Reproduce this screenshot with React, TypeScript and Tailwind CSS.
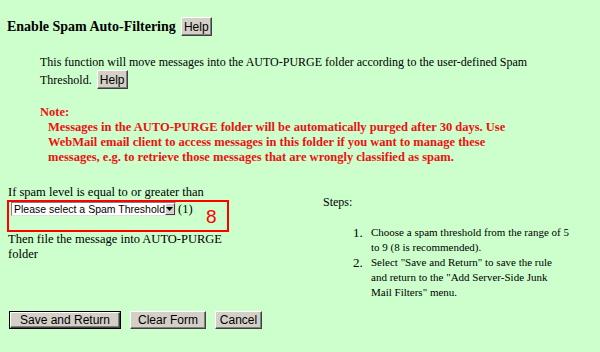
import React from "react";

const serif = { fontFamily: '"Liberation Serif", "Times New Roman", serif' };
const sans = { fontFamily: '"Liberation Sans", Arial, sans-serif' };

function WinButton({ children, className = "", isDefault = false }: { children: React.ReactNode; className?: string; isDefault?: boolean }) {
  return (
    <div className={`${isDefault ? "border border-black" : ""} inline-flex shrink-0`}>
      <div
        className={`bg-[#d4d0c8] border-t border-l border-t-white border-l-white border-b border-r border-b-[#404040] border-r-[#404040] shadow-[inset_-1px_-1px_0_#808080] flex items-center justify-center text-[12px] text-black leading-none ${className}`}
        style={sans}
      >
        {children}
      </div>
    </div>
  );
}

export default function App() {
  return (
    <div className="w-[600px] h-[352px] bg-[#ccffcc] text-black overflow-hidden relative" style={serif}>
      <div className="pt-[17px] pl-[7px] flex items-center gap-[5px] h-[36px]">
        <h1 className="text-[14px] font-bold leading-none">Enable Spam Auto-Filtering</h1>
        <WinButton className="w-[31px] h-[19px] text-[11.5px]">Help</WinButton>
      </div>

      <div className="pl-[40px] mt-[19px] text-[12px]">
        <div className="h-[15px] leading-[15px] whitespace-nowrap">
          This function will move messages into the AUTO-PURGE folder according to the user-defined Spam
        </div>
        <div className="flex items-center h-[19px] gap-[5px]">
          <span className="leading-[15px] pt-[1px]">Threshold.</span>
          <WinButton className="w-[31px] h-[19px] text-[11.5px]">Help</WinButton>
        </div>
      </div>

      <div className="pl-[40px] mt-[16px] text-[#ee1111] font-bold text-[12.5px] leading-[15px]">
        <div>Note:</div>
        <div className="pl-[8px] whitespace-nowrap">
          <div>Messages in the AUTO-PURGE folder will be automatically purged after 30 days. Use</div>
          <div>WebMail email client to access messages in this folder if you want to manage these</div>
          <div>messages, e.g. to retrieve those messages that are wrongly classified as spam.</div>
        </div>
      </div>

      <div className="flex mt-[20px]">
        <div className="w-[323px] pl-[8px] text-[12.5px] leading-[15px]">
          <div className="h-[15px] whitespace-nowrap">If spam level is equal to or greater than</div>
          <div className="relative w-[222px] h-[32px] ml-[-1px]">
            <div className="absolute inset-0 border-2 border-[#ff0000] pointer-events-none" />
            <div className="flex items-center pl-[4px] pt-[2px]">
              <div className="w-[165px] h-[14px] bg-white border-t border-l border-[#808080] border-b border-r border-b-[#e0e0e0] border-r-[#e0e0e0] flex items-center justify-between" style={sans}>
                <span className="text-[10.5px] leading-none pl-[2px] whitespace-nowrap">Please select a Spam Threshold</span>
                <span className="w-[12px] h-[12px] bg-[#d4d0c8] border-t border-l border-t-white border-l-white border-b border-r border-b-[#404040] border-r-[#404040] flex items-center justify-center">
                  <svg width="7" height="4" viewBox="0 0 7 4"><path d="M0 0h7L3.5 4z" fill="#000" /></svg>
                </span>
              </div>
              <span className="ml-[2px] text-[12.5px] leading-none">(1)</span>
            </div>
            <span className="absolute left-[199px] top-[7px] text-[#ff0000] text-[19px] leading-none" style={sans}>8</span>
          </div>
          <div className="w-[230px]">
            <div>Then file the message into AUTO-PURGE</div>
            <div>folder</div>
          </div>
        </div>

        <div className="text-[12px] leading-[15px]">
          <div className="mt-[10px]">Steps:</div>
          <ol className="mt-[15px] pl-[30px] text-[11px] leading-[15px] whitespace-nowrap">
            <li className="flex">
              <span className="w-[18px] text-[13px] shrink-0">1.</span>
              <span>
                Choose a spam threshold from the range of 5<br />
                to 9 (8 is recommended).
              </span>
            </li>
            <li className="flex">
              <span className="w-[18px] text-[13px] shrink-0">2.</span>
              <span>
                Select "Save and Return" to save the rule<br />
                and return to the "Add Server-Side Junk<br />
                Mail Filters" menu.
              </span>
            </li>
          </ol>
        </div>
      </div>

      <div className="absolute left-[9px] top-[311px] flex gap-[9px]">
        <WinButton isDefault className="w-[110px] h-[16px]">Save and Return</WinButton>
        <WinButton className="w-[76px] h-[18px]">Clear Form</WinButton>
        <WinButton className="w-[47px] h-[18px]">Cancel</WinButton>
      </div>
    </div>
  );
}
